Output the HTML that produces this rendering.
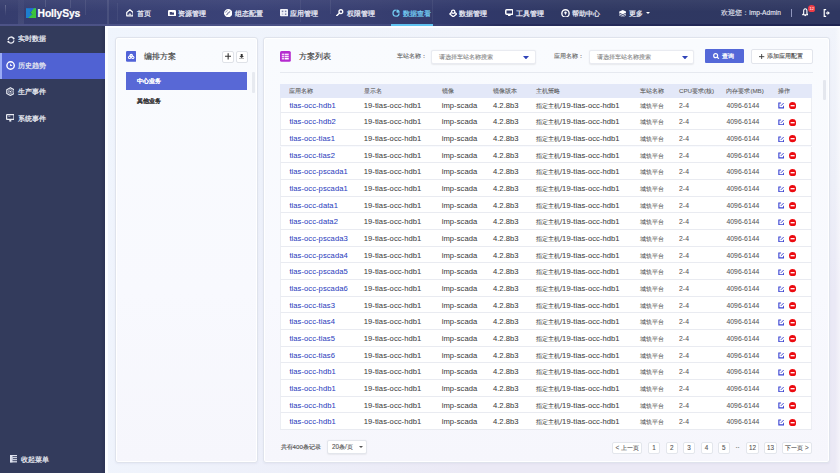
<!DOCTYPE html>
<html><head><meta charset="utf-8">
<style>
*{margin:0;padding:0;box-sizing:border-box}
html,body{width:840px;height:473px;overflow:hidden;font-family:"Liberation Sans",sans-serif;background:#eef1f8;position:relative}
.abs{position:absolute}
#hdr{left:0;top:0;width:840px;height:26px;background:linear-gradient(180deg,rgba(255,255,255,.05),rgba(255,255,255,0) 45%),linear-gradient(90deg,#363d6e 0%,#384073 15%,#3a4277 30%,#373e70 45%,#30386a 56%,#2f3862 70%,#2f3761 100%)}
#hdrline{left:0;top:24px;width:840px;height:2px;background:linear-gradient(90deg,#4d5387 0%,#4a5186 40%,#3f467a 50%,#272d5c 60%,#1f2552 100%)}
.nav{position:absolute;top:0;height:26px;color:#e9ebf5;font-size:7.3px;line-height:27px;white-space:nowrap}
#side{left:0;top:26px;width:105px;height:447px;background:#333b5c}
.si{position:absolute;left:0;width:105px;height:26.5px;color:#e6e8f0;font-size:7.2px;line-height:26.5px;padding-left:18px;white-space:nowrap}
.si.act{background:#5062d3}
.si.act:before{content:"";position:absolute;left:0;top:0;width:1.8px;height:100%;background:#9aabf6}
.si svg{position:absolute;left:6px;top:9px}
#main{left:105px;top:26px;width:735px;height:447px;background:linear-gradient(90deg,rgba(240,245,253,.9) 0%,rgba(238,243,252,.6) 25%,rgba(236,241,252,0) 50%),linear-gradient(180deg,#f1f4fb 0%,#edeff8 35%,#eae9f6 60%,#ebe9f5 100%)}
.panel{position:absolute;background:linear-gradient(180deg,#f9fbfe 0%,#f8f9fe 60%,#f6f6fc 100%);border:1px solid #dfe3ec;border-radius:3px;box-shadow:inset 0 0 0 1px #fff,0 1px 2px rgba(120,120,170,.08)}
.t{position:absolute;white-space:nowrap}
.nav,.si,.t{-webkit-text-stroke:0.25px currentColor}
.lbl,.sel span,.pg{-webkit-text-stroke:0.1px currentColor}
.th{-webkit-text-stroke:0.08px currentColor}
.td{-webkit-text-stroke:0.05px currentColor}
.ptitle{position:absolute;top:50px;font-size:8.2px;line-height:14px;font-weight:normal;color:#333;white-space:nowrap;-webkit-text-stroke:0.12px #333}
.ibtn{position:absolute;top:50.5px;width:11.5px;height:12px;border:1px solid #dfe2e8;border-radius:2px;background:#fff}
.sel{position:absolute;top:49.5px;height:14.2px;background:#fff;border:1px solid #e9ebf1;border-radius:2px;box-shadow:0 0.5px 1.5px rgba(0,0,0,.07)}
.sel span{position:absolute;left:7px;top:0;line-height:11.8px;font-size:6.3px;color:#888}
.sel i{position:absolute;right:6.3px;top:5.2px;width:0;height:0;border-left:2.7px solid transparent;border-right:2.7px solid transparent;border-top:2.7px solid #3044b8}
.lbl{position:absolute;top:49.5px;line-height:12.6px;font-size:6.2px;color:#666;white-space:nowrap}
.th{position:absolute;height:13px;line-height:14px;font-size:6.2px;color:#5e5e5e;white-space:nowrap}
.tr{position:absolute;left:280.2px;width:532.3px;height:16.67px;border-bottom:1px solid #e9ebf1;border-left:1px solid #eceef3;border-right:1px solid #eceef3;background:#fff}
.td{position:absolute;height:16.67px;line-height:17.6px;font-size:7.6px;letter-spacing:0.06px;color:#404040;white-space:nowrap}
.td.lk{color:#2e3fc0}
.td .c{font-size:6.05px}
.td.sm{font-size:6.8px;color:#555}
.td.sm .c{font-size:6.3px}
.pg{position:absolute;top:441.5px;height:12.2px;background:#fff;border:1px solid #e3e6ec;border-radius:2px;font-size:6.3px;line-height:10.4px;text-align:center;color:#555;white-space:nowrap}
</style></head><body>
<div id="hdr" class="abs"></div>
<div id="hdrline" class="abs"></div>
<div class="abs" style="left:4.8px;top:5px;width:1.4px;height:11px;background:linear-gradient(180deg,rgba(255,255,255,.22),rgba(255,255,255,0))"></div>
<div class="abs" style="left:17.5px;top:0;width:6px;height:24px;background:linear-gradient(180deg,rgba(255,255,255,.02),rgba(255,255,255,.07))"></div>
<div class="abs" style="left:45px;top:0;width:1px;height:7px;background:rgba(255,255,255,.12)"></div>
<div class="abs" style="left:70px;top:0;width:1px;height:8px;background:rgba(255,255,255,.10)"></div>
<div class="abs" style="left:85px;top:0;width:1px;height:15px;background:rgba(255,255,255,.08)"></div>
<div class="abs" style="left:107px;top:0;width:2px;height:24px;background:rgba(255,255,255,.09)"></div>
<div class="abs" style="left:117px;top:3px;width:1px;height:18px;background:rgba(255,255,255,.06)"></div>
<div class="abs" style="left:300px;top:0;width:1px;height:22px;background:rgba(255,255,255,.06)"></div>
<div class="abs" style="left:330px;top:0;width:1px;height:14px;background:rgba(255,255,255,.07)"></div>
<div class="abs" style="left:432px;top:0;width:1px;height:22px;background:rgba(255,255,255,.06)"></div>
<!-- logo -->
<svg class="abs" style="left:25.8px;top:7.8px" width="10.2" height="10.6" viewBox="0 0 10 10"><rect width="10" height="10" fill="#1d7fd0"/><path d="M3 0H7.8L5.3 3.2L4.2 1.8Z" fill="#2a5fd8" opacity=".7"/><path d="M7.8 0H10V10H1.7L6 6.2L5.1 5.3L4.3 4.3L5.3 3.2Z" fill="#3cc43e"/><path d="M5.3 3.2L4.3 4.3L5.1 5.3L6 6.2" fill="none" stroke="#27346e" stroke-width="0.5"/></svg>
<div class="t" style="left:37.6px;top:7.3px;font-weight:bold;font-size:10.3px;letter-spacing:-0.12px;color:#fff;line-height:14px;-webkit-text-stroke:0.2px #fff">HollySys</div>

<!-- nav icons -->
<svg class="abs" style="left:125.5px;top:9.2px" width="7.8" height="7.6" viewBox="0 0 16 15.5"><path d="M8 1.5L14.5 7V14H1.5V7Z" fill="none" stroke="#fff" stroke-width="2.4" stroke-linejoin="round"/><path d="M5 12A3 3 0 0 1 11 12Z" fill="#fff"/></svg>
<div class="nav" style="left:136.5px">首页</div>
<svg class="abs" style="left:167.8px;top:9.6px" width="8" height="6.6" viewBox="0 0 16 13"><rect x="0" y="0" width="16" height="13" rx="2.5" fill="#fff"/><path d="M3.5 4H7.5L8.5 5H12V9.5H3.5Z" fill="#3a4172"/></svg>
<div class="nav" style="left:177.5px">资源管理</div>
<svg class="abs" style="left:223.7px;top:8.8px" width="8.4" height="8.3" viewBox="0 0 16 16"><circle cx="8" cy="8" r="8" fill="#fff"/><path d="M3.5 12.5L7 7L12.5 3.5L9 9Z" fill="#3a4172"/><circle cx="8" cy="8" r="1.2" fill="#fff"/><path d="M3 7A5 5 0 0 1 7 3" fill="none" stroke="#3a4172" stroke-width="1"/></svg>
<div class="nav" style="left:234.5px">组态配置</div>
<svg class="abs" style="left:279.8px;top:9.4px" width="8.2" height="7.3" viewBox="0 0 16 14"><rect x="0" y="0" width="16" height="14" rx="2" fill="#f2f3f8"/><rect x="3.5" y="3" width="3" height="3" fill="#7c82a8"/><rect x="9.5" y="3" width="3" height="3" fill="#7c82a8"/><rect x="3.5" y="8.5" width="3" height="3" fill="#c2c5d8"/><rect x="9.5" y="8.5" width="3" height="3" fill="#7c82a8"/></svg>
<div class="nav" style="left:290px">应用管理</div>
<svg class="abs" style="left:336.3px;top:8.8px" width="7.7" height="7.4" viewBox="0 0 15 14.5"><circle cx="9.5" cy="5.2" r="3.7" fill="none" stroke="#fff" stroke-width="2.6"/><path d="M7 8L1.2 13.3" stroke="#fff" stroke-width="2.8" stroke-linecap="round"/></svg>
<div class="nav" style="left:346.5px">权限管理</div>
<svg class="abs" style="left:391.8px;top:9px" width="8.3" height="8.2" viewBox="0 0 16 16"><path d="M7.4 2.2A6 6 0 1 0 13.8 8.6" fill="none" stroke="#72c8ef" stroke-width="2.4"/><path d="M8.6 7.4V1A6.4 6.4 0 0 1 15 7.4Z" fill="#72c8ef"/><circle cx="7.6" cy="8.4" r="2.2" fill="#2c3262" opacity=".6"/></svg>
<div class="nav" style="left:403px;color:#72c8ef">数据查看</div>
<div class="abs" style="left:391px;top:24px;width:42px;height:2.2px;background:#5ec2f0"></div>
<svg class="abs" style="left:448.7px;top:8.7px" width="8.4" height="8.3" viewBox="0 0 16 16"><circle cx="8" cy="5.2" r="3.2" fill="none" stroke="#fff" stroke-width="2.5"/><path d="M4.3 6.8L1.5 9.6L8 15L14.5 9.6L11.7 6.8" fill="none" stroke="#fff" stroke-width="2.5" stroke-linejoin="round"/></svg>
<div class="nav" style="left:459px">数据管理</div>
<svg class="abs" style="left:504.8px;top:9.1px" width="8.6" height="7.3" viewBox="0 0 17 14.5"><rect x="1.5" y="1.5" width="14" height="8.8" rx="1.8" fill="none" stroke="#fff" stroke-width="3"/><rect x="6" y="10" width="5" height="4.5" fill="#fff"/></svg>
<div class="nav" style="left:516px">工具管理</div>
<svg class="abs" style="left:561.1px;top:8.5px" width="9" height="8.9" viewBox="0 0 18 18"><circle cx="9" cy="9" r="7.4" fill="none" stroke="#fff" stroke-width="2.8"/><circle cx="9" cy="7.3" r="2.4" fill="#fff"/><path d="M7.4 8.4L9 12.8L10.6 8.4Z" fill="#fff"/></svg>
<div class="nav" style="left:572px">帮助中心</div>
<svg class="abs" style="left:618.5px;top:9.6px" width="7.5" height="7.1" viewBox="0 0 15 14"><path d="M7.5 0L15 3.5V5L7.5 8.5L0 5V3.5Z" fill="#fff"/><path d="M0 6.5L7.5 10L15 6.5V8.5L7.5 12L0 8.5Z" fill="#dfe1ee"/><path d="M0 10L7.5 13.2L15 10V11L7.5 14L0 11Z" fill="#fff"/></svg>
<div class="nav" style="left:629px">更多</div>
<div class="abs" style="left:646px;top:11.8px;width:0;height:0;border-left:2.1px solid transparent;border-right:2.1px solid transparent;border-top:2.6px solid #fff"></div>
<div class="t" style="right:59.2px;top:0;line-height:26px;font-size:6.6px;color:#e9ebf5;-webkit-text-stroke:0.1px #e9ebf5">欢迎您：imp-Admin</div>
<div class="abs" style="left:790.5px;top:9.4px;width:0.8px;height:7.2px;background:#9096bd"></div>
<svg class="abs" style="left:801.7px;top:8.3px" width="6.6" height="8.6" viewBox="0 0 13 17"><path d="M6.5 1.5C4 1.5 3.3 3.5 3.3 6V11L1.3 13.3H11.7L9.7 11V6C9.7 3.5 9 1.5 6.5 1.5Z" fill="none" stroke="#fff" stroke-width="2.2" stroke-linejoin="round"/><path d="M4.8 15H8.2" stroke="#fff" stroke-width="2"/></svg>
<svg class="abs" style="left:808px;top:4.7px" width="7.3" height="7.3" viewBox="0 0 10 10"><circle cx="5" cy="5" r="5" fill="#f03c46"/><text x="5" y="7" font-size="5.6" fill="#fff" text-anchor="middle" font-family="Liberation Sans">12</text></svg>
<svg class="abs" style="left:823.1px;top:8.8px" width="7.3" height="8.1" viewBox="0 0 14 16"><path d="M6 1.3H2.2V14.7H6" fill="none" stroke="#fff" stroke-width="2.4"/><path d="M5.5 8H9" stroke="#fff" stroke-width="2.4"/><path d="M8.5 4L13.5 8L8.5 12Z" fill="#fff"/></svg>

<div id="side" class="abs">
  <div class="abs" style="left:100px;top:0;width:5px;height:447px;background:linear-gradient(90deg,rgba(30,36,70,0),rgba(30,36,70,.35))"></div>
  <div class="si" style="top:0"><svg width="8" height="8.2" viewBox="0 0 16 16" style="left:6.5px;top:9.8px"><path d="M2.3 6.4A6 6 0 0 1 13.3 4.8" fill="none" stroke="#e9ebf3" stroke-width="2.6" stroke-linecap="round"/><path d="M13.7 9.6A6 6 0 0 1 2.7 11.2" fill="none" stroke="#e9ebf3" stroke-width="2.6" stroke-linecap="round"/><circle cx="13.3" cy="4.8" r="1.8" fill="#f4f5fa"/><circle cx="2.7" cy="11.2" r="1.8" fill="#f4f5fa"/></svg>实时数据</div>
  <div class="si act" style="top:26.5px"><svg width="9.2" height="9" viewBox="0 0 18 18" style="left:5.8px;top:8.6px"><circle cx="9" cy="9" r="7.4" fill="none" stroke="#fff" stroke-width="2.8"/><path d="M8 4.8V10.2H12.8Z" fill="#fff"/></svg>历史趋势</div>
  <div class="si" style="top:53px"><svg width="8.8" height="9.2" viewBox="0 0 17 18" style="left:5.7px;top:8.4px"><path d="M8.5 1.3L15.6 5.2V12.8L8.5 16.7L1.4 12.8V5.2Z" fill="none" stroke="#e9ebf3" stroke-width="2.3" stroke-linejoin="round"/><circle cx="8.5" cy="9" r="3.9" fill="none" stroke="#e9ebf3" stroke-width="1.2"/><path d="M6.2 7.6H10.8L8.5 11.2Z" fill="#e9ebf3"/></svg>生产事件</div>
  <div class="si" style="top:79.5px"><svg width="8.6" height="7.6" viewBox="0 0 17 15" style="left:5.8px;top:8.7px"><rect x="1.2" y="1.2" width="14.6" height="9.5" rx="1" fill="none" stroke="#e9ebf3" stroke-width="2.4"/><path d="M4.5 4.5H8.5" stroke="#c8cbe0" stroke-width="1.6"/><rect x="6.5" y="10" width="4" height="5" fill="#e9ebf3"/></svg>系统事件</div>
  <div class="si" style="top:420.5px;padding-left:20.5px"><svg width="7.2" height="7.4" viewBox="0 0 14.4 14.8" style="left:9.5px;top:8.9px"><rect x="0" y="0" width="14.4" height="2.4" fill="#dfe2ee"/><rect x="0" y="12.4" width="14.4" height="2.4" fill="#dfe2ee"/><rect x="0" y="0" width="5" height="14.8" fill="#dfe2ee"/><rect x="5" y="4.2" width="9.4" height="2.2" fill="#dfe2ee"/><rect x="5" y="8.3" width="9.4" height="2.2" fill="#dfe2ee"/><rect x="3" y="4" width="2.5" height="6.5" fill="#c9cde0"/></svg>收起菜单</div>
</div>

<div id="main" class="abs"></div>
<div class="abs" style="left:105px;top:26px;width:2.5px;height:447px;background:#fbfdff"></div>
<div class="abs" style="left:835px;top:26px;width:5px;height:447px;background:linear-gradient(90deg,rgba(255,255,255,0),rgba(255,255,255,.5))"></div>
<div class="abs" style="left:105px;top:26px;width:735px;height:2px;background:#fbfdff"></div>
<div class="panel" style="left:114.5px;top:36.5px;width:143px;height:426.8px"></div>
<div class="panel" style="left:262.5px;top:36.5px;width:567px;height:426.8px"></div>

<!-- left panel -->
<svg class="abs" style="left:126px;top:51.2px" width="10.4" height="10.7" viewBox="0 0 21 21.6"><rect width="21" height="21.6" rx="2.5" fill="#5163d8"/><circle cx="10.5" cy="9" r="3.6" fill="#fff"/><circle cx="7.3" cy="13" r="3.3" fill="#fff"/><circle cx="13.7" cy="13" r="3.3" fill="#fff"/><circle cx="7.3" cy="13" r="1.3" fill="#5163d8"/><circle cx="13.7" cy="13" r="1.3" fill="#5163d8"/><circle cx="10.5" cy="9.2" r="1.2" fill="#8f9be6"/></svg>
<div class="ptitle" style="left:144.2px">编排方案</div>
<div class="ibtn" style="left:222.3px"><svg class="abs" style="left:1.7px;top:1.7px" width="6.3" height="6.6" viewBox="0 0 12 12.6"><path d="M6 0.3V12.3M0 6.3H12" stroke="#333" stroke-width="2.1"/></svg></div>
<div class="ibtn" style="left:236.3px"><svg class="abs" style="left:1.5px;top:2.3px" width="5.4" height="5.6" viewBox="0 0 10 10.4"><path d="M3.2 0H6.8V3.8H9.2L5 7.6L0.8 3.8H3.2Z" fill="#333"/><rect x="0" y="8.6" width="10" height="1.8" fill="#333"/></svg></div>
<div class="abs" style="left:126px;top:72.4px;width:121.3px;height:17.4px;background:#5868d6"></div>
<div class="t" style="left:136.6px;top:72.4px;line-height:17.4px;font-size:6.3px;font-weight:bold;color:#fff;-webkit-text-stroke:0.05px #fff">中心业务</div>
<div class="t" style="left:136.6px;top:91.8px;line-height:17.4px;font-size:6.3px;font-weight:bold;color:#333;-webkit-text-stroke:0.05px #333">其他业务</div>
<div class="abs" style="left:252.3px;top:72px;width:2.3px;height:21px;background:#e7eaf0;border-radius:1px"></div>

<!-- right panel header -->
<svg class="abs" style="left:280.2px;top:51px" width="10.8" height="10.9" viewBox="0 0 21 21"><rect width="21" height="21" rx="3" fill="#b52bcf"/><rect x="3.5" y="5" width="5" height="3" fill="#f3d6f8"/><rect x="9.5" y="5" width="7.5" height="3" fill="#f7e2fa"/><rect x="3.5" y="9.2" width="5" height="3" fill="#f3d6f8"/><rect x="9.5" y="9.2" width="7.5" height="3" fill="#f7e2fa"/><rect x="3.5" y="13.4" width="5" height="3" fill="#f3d6f8"/><rect x="9.5" y="13.4" width="7.5" height="3" fill="#fff"/></svg>
<div class="ptitle" style="left:298.6px">方案列表</div>
<div class="lbl" style="left:396.8px">车站名称：</div>
<div class="sel" style="left:431.4px;width:104.8px"><span>请选择车站名称搜索</span><svg style="position:absolute;right:5.8px;top:5px" width="6" height="3.4" viewBox="0 0 6 3.4"><path d="M0 0H6L3 3.4Z" fill="#2f43b8"/></svg></div>
<div class="lbl" style="left:554.3px">应用名称：</div>
<div class="sel" style="left:589px;width:105.3px"><span>请选择车站名称搜索</span><svg style="position:absolute;right:5.8px;top:5px" width="6" height="3.4" viewBox="0 0 6 3.4"><path d="M0 0H6L3 3.4Z" fill="#2f43b8"/></svg></div>
<div class="abs" style="left:704.7px;top:49.4px;width:39.4px;height:13.8px;background:#5468d8;border-radius:1px"></div>
<svg class="abs" style="left:713.3px;top:53.2px" width="6.3" height="6.3" viewBox="0 0 13 13"><circle cx="5.5" cy="5.5" r="4.1" fill="none" stroke="#fff" stroke-width="2.4"/><path d="M8.6 8.6L12 12" stroke="#fff" stroke-width="2.6"/></svg>
<div class="t" style="left:721.8px;top:49.4px;line-height:14px;font-size:6.3px;color:#fff">查询</div>
<div class="abs" style="left:751.2px;top:49.2px;width:61.4px;height:14.8px;background:#fff;border:1px solid #e2e5ec;border-radius:2px"></div>
<svg class="abs" style="left:759.3px;top:54px" width="5.3" height="5.3" viewBox="0 0 11 11"><path d="M5.5 0V11M0 5.5H11" stroke="#333" stroke-width="1.8"/></svg>
<div class="t" style="left:767.2px;top:49.2px;line-height:14.8px;font-size:6.3px;color:#444;-webkit-text-stroke:0.1px #444">添加应用配置</div>
<div class="abs" style="left:280px;top:72.2px;width:532.5px;height:1px;background:#e6e9f0"></div>
<div class="abs" style="left:823px;top:80px;width:2.5px;height:19.5px;background:#e4e7ee;border-radius:1px"></div>

<div class="abs" style="left:280.2px;top:83.5px;width:532.3px;height:14.4px;background:#e3e8f8;z-index:2"></div>
<div class="th" style="left:289.4px;top:84.1px;z-index:3">应用名称</div>
<div class="th" style="left:363.8px;top:84.1px;z-index:3">显示名</div>
<div class="th" style="left:441.7px;top:84.1px;z-index:3">镜像</div>
<div class="th" style="left:492.9px;top:84.1px;z-index:3">镜像版本</div>
<div class="th" style="left:535.7px;top:84.1px;z-index:3">主机策略</div>
<div class="th" style="left:640.2px;top:84.1px;z-index:3">车站名称</div>
<div class="th" style="left:679px;top:84.1px;z-index:3">CPU要求(核)</div>
<div class="th" style="left:726.4px;top:84.1px;z-index:3">内存要求(MB)</div>
<div class="th" style="left:777.6px;top:84.1px;z-index:3">操作</div>
<div class="tr" style="top:96.50px"></div>
<div class="td lk" style="left:289.4px;top:96.50px">tias-occ-hdb1</div>
<div class="td" style="left:363.8px;top:96.50px">19-tias-occ-hdb1</div>
<div class="td" style="left:441.7px;top:96.50px">imp-scada</div>
<div class="td" style="left:492.9px;top:96.50px">4.2.8b3</div>
<div class="td" style="left:535.7px;top:96.50px"><span class="c">指定主机</span>/19-tias-occ-hdb1</div>
<div class="td sm" style="left:640.2px;top:96.50px"><span class="c">城轨平台</span></div>
<div class="td sm" style="left:679px;top:96.50px">2-4</div>
<div class="td sm" style="left:726.4px;top:96.50px">4096-6144</div>
<svg class="abs" style="left:777.6px;top:102.40px" width="6.6" height="6.4" viewBox="0 0 15 14"><path d="M13 8V13H2V2H7" fill="none" stroke="#3a44d2" stroke-width="2.6"/><path d="M6.5 8.5L13 2" stroke="#3a44d2" stroke-width="2.2"/></svg>
<svg class="abs" style="left:789px;top:102.00px" width="7.2" height="7.4" viewBox="0 0 10 10"><circle cx="5" cy="5" r="5" fill="#ec0a10"/><rect x="2.2" y="4.1" width="5.6" height="1.8" fill="#fff"/></svg>
<div class="tr" style="top:113.17px"></div>
<div class="td lk" style="left:289.4px;top:113.17px">tias-occ-hdb2</div>
<div class="td" style="left:363.8px;top:113.17px">19-tias-occ-hdb1</div>
<div class="td" style="left:441.7px;top:113.17px">imp-scada</div>
<div class="td" style="left:492.9px;top:113.17px">4.2.8b3</div>
<div class="td" style="left:535.7px;top:113.17px"><span class="c">指定主机</span>/19-tias-occ-hdb1</div>
<div class="td sm" style="left:640.2px;top:113.17px"><span class="c">城轨平台</span></div>
<div class="td sm" style="left:679px;top:113.17px">2-4</div>
<div class="td sm" style="left:726.4px;top:113.17px">4096-6144</div>
<svg class="abs" style="left:777.6px;top:119.07px" width="6.6" height="6.4" viewBox="0 0 15 14"><path d="M13 8V13H2V2H7" fill="none" stroke="#3a44d2" stroke-width="2.6"/><path d="M6.5 8.5L13 2" stroke="#3a44d2" stroke-width="2.2"/></svg>
<svg class="abs" style="left:789px;top:118.67px" width="7.2" height="7.4" viewBox="0 0 10 10"><circle cx="5" cy="5" r="5" fill="#ec0a10"/><rect x="2.2" y="4.1" width="5.6" height="1.8" fill="#fff"/></svg>
<div class="tr" style="top:129.84px"></div>
<div class="td lk" style="left:289.4px;top:129.84px">tias-occ-tias1</div>
<div class="td" style="left:363.8px;top:129.84px">19-tias-occ-hdb1</div>
<div class="td" style="left:441.7px;top:129.84px">imp-scada</div>
<div class="td" style="left:492.9px;top:129.84px">4.2.8b3</div>
<div class="td" style="left:535.7px;top:129.84px"><span class="c">指定主机</span>/19-tias-occ-hdb1</div>
<div class="td sm" style="left:640.2px;top:129.84px"><span class="c">城轨平台</span></div>
<div class="td sm" style="left:679px;top:129.84px">2-4</div>
<div class="td sm" style="left:726.4px;top:129.84px">4096-6144</div>
<svg class="abs" style="left:777.6px;top:135.74px" width="6.6" height="6.4" viewBox="0 0 15 14"><path d="M13 8V13H2V2H7" fill="none" stroke="#3a44d2" stroke-width="2.6"/><path d="M6.5 8.5L13 2" stroke="#3a44d2" stroke-width="2.2"/></svg>
<svg class="abs" style="left:789px;top:135.34px" width="7.2" height="7.4" viewBox="0 0 10 10"><circle cx="5" cy="5" r="5" fill="#ec0a10"/><rect x="2.2" y="4.1" width="5.6" height="1.8" fill="#fff"/></svg>
<div class="tr" style="top:146.51px"></div>
<div class="td lk" style="left:289.4px;top:146.51px">tias-occ-tias2</div>
<div class="td" style="left:363.8px;top:146.51px">19-tias-occ-hdb1</div>
<div class="td" style="left:441.7px;top:146.51px">imp-scada</div>
<div class="td" style="left:492.9px;top:146.51px">4.2.8b3</div>
<div class="td" style="left:535.7px;top:146.51px"><span class="c">指定主机</span>/19-tias-occ-hdb1</div>
<div class="td sm" style="left:640.2px;top:146.51px"><span class="c">城轨平台</span></div>
<div class="td sm" style="left:679px;top:146.51px">2-4</div>
<div class="td sm" style="left:726.4px;top:146.51px">4096-6144</div>
<svg class="abs" style="left:777.6px;top:152.41px" width="6.6" height="6.4" viewBox="0 0 15 14"><path d="M13 8V13H2V2H7" fill="none" stroke="#3a44d2" stroke-width="2.6"/><path d="M6.5 8.5L13 2" stroke="#3a44d2" stroke-width="2.2"/></svg>
<svg class="abs" style="left:789px;top:152.01px" width="7.2" height="7.4" viewBox="0 0 10 10"><circle cx="5" cy="5" r="5" fill="#ec0a10"/><rect x="2.2" y="4.1" width="5.6" height="1.8" fill="#fff"/></svg>
<div class="tr" style="top:163.18px"></div>
<div class="td lk" style="left:289.4px;top:163.18px">tias-occ-pscada1</div>
<div class="td" style="left:363.8px;top:163.18px">19-tias-occ-hdb1</div>
<div class="td" style="left:441.7px;top:163.18px">imp-scada</div>
<div class="td" style="left:492.9px;top:163.18px">4.2.8b3</div>
<div class="td" style="left:535.7px;top:163.18px"><span class="c">指定主机</span>/19-tias-occ-hdb1</div>
<div class="td sm" style="left:640.2px;top:163.18px"><span class="c">城轨平台</span></div>
<div class="td sm" style="left:679px;top:163.18px">2-4</div>
<div class="td sm" style="left:726.4px;top:163.18px">4096-6144</div>
<svg class="abs" style="left:777.6px;top:169.08px" width="6.6" height="6.4" viewBox="0 0 15 14"><path d="M13 8V13H2V2H7" fill="none" stroke="#3a44d2" stroke-width="2.6"/><path d="M6.5 8.5L13 2" stroke="#3a44d2" stroke-width="2.2"/></svg>
<svg class="abs" style="left:789px;top:168.68px" width="7.2" height="7.4" viewBox="0 0 10 10"><circle cx="5" cy="5" r="5" fill="#ec0a10"/><rect x="2.2" y="4.1" width="5.6" height="1.8" fill="#fff"/></svg>
<div class="tr" style="top:179.85px"></div>
<div class="td lk" style="left:289.4px;top:179.85px">tias-occ-pscada1</div>
<div class="td" style="left:363.8px;top:179.85px">19-tias-occ-hdb1</div>
<div class="td" style="left:441.7px;top:179.85px">imp-scada</div>
<div class="td" style="left:492.9px;top:179.85px">4.2.8b3</div>
<div class="td" style="left:535.7px;top:179.85px"><span class="c">指定主机</span>/19-tias-occ-hdb1</div>
<div class="td sm" style="left:640.2px;top:179.85px"><span class="c">城轨平台</span></div>
<div class="td sm" style="left:679px;top:179.85px">2-4</div>
<div class="td sm" style="left:726.4px;top:179.85px">4096-6144</div>
<svg class="abs" style="left:777.6px;top:185.75px" width="6.6" height="6.4" viewBox="0 0 15 14"><path d="M13 8V13H2V2H7" fill="none" stroke="#3a44d2" stroke-width="2.6"/><path d="M6.5 8.5L13 2" stroke="#3a44d2" stroke-width="2.2"/></svg>
<svg class="abs" style="left:789px;top:185.35px" width="7.2" height="7.4" viewBox="0 0 10 10"><circle cx="5" cy="5" r="5" fill="#ec0a10"/><rect x="2.2" y="4.1" width="5.6" height="1.8" fill="#fff"/></svg>
<div class="tr" style="top:196.52px"></div>
<div class="td lk" style="left:289.4px;top:196.52px">tias-occ-data1</div>
<div class="td" style="left:363.8px;top:196.52px">19-tias-occ-hdb1</div>
<div class="td" style="left:441.7px;top:196.52px">imp-scada</div>
<div class="td" style="left:492.9px;top:196.52px">4.2.8b3</div>
<div class="td" style="left:535.7px;top:196.52px"><span class="c">指定主机</span>/19-tias-occ-hdb1</div>
<div class="td sm" style="left:640.2px;top:196.52px"><span class="c">城轨平台</span></div>
<div class="td sm" style="left:679px;top:196.52px">2-4</div>
<div class="td sm" style="left:726.4px;top:196.52px">4096-6144</div>
<svg class="abs" style="left:777.6px;top:202.42px" width="6.6" height="6.4" viewBox="0 0 15 14"><path d="M13 8V13H2V2H7" fill="none" stroke="#3a44d2" stroke-width="2.6"/><path d="M6.5 8.5L13 2" stroke="#3a44d2" stroke-width="2.2"/></svg>
<svg class="abs" style="left:789px;top:202.02px" width="7.2" height="7.4" viewBox="0 0 10 10"><circle cx="5" cy="5" r="5" fill="#ec0a10"/><rect x="2.2" y="4.1" width="5.6" height="1.8" fill="#fff"/></svg>
<div class="tr" style="top:213.19px"></div>
<div class="td lk" style="left:289.4px;top:213.19px">tias-occ-data2</div>
<div class="td" style="left:363.8px;top:213.19px">19-tias-occ-hdb1</div>
<div class="td" style="left:441.7px;top:213.19px">imp-scada</div>
<div class="td" style="left:492.9px;top:213.19px">4.2.8b3</div>
<div class="td" style="left:535.7px;top:213.19px"><span class="c">指定主机</span>/19-tias-occ-hdb1</div>
<div class="td sm" style="left:640.2px;top:213.19px"><span class="c">城轨平台</span></div>
<div class="td sm" style="left:679px;top:213.19px">2-4</div>
<div class="td sm" style="left:726.4px;top:213.19px">4096-6144</div>
<svg class="abs" style="left:777.6px;top:219.09px" width="6.6" height="6.4" viewBox="0 0 15 14"><path d="M13 8V13H2V2H7" fill="none" stroke="#3a44d2" stroke-width="2.6"/><path d="M6.5 8.5L13 2" stroke="#3a44d2" stroke-width="2.2"/></svg>
<svg class="abs" style="left:789px;top:218.69px" width="7.2" height="7.4" viewBox="0 0 10 10"><circle cx="5" cy="5" r="5" fill="#ec0a10"/><rect x="2.2" y="4.1" width="5.6" height="1.8" fill="#fff"/></svg>
<div class="tr" style="top:229.86px"></div>
<div class="td lk" style="left:289.4px;top:229.86px">tias-occ-pscada3</div>
<div class="td" style="left:363.8px;top:229.86px">19-tias-occ-hdb1</div>
<div class="td" style="left:441.7px;top:229.86px">imp-scada</div>
<div class="td" style="left:492.9px;top:229.86px">4.2.8b3</div>
<div class="td" style="left:535.7px;top:229.86px"><span class="c">指定主机</span>/19-tias-occ-hdb1</div>
<div class="td sm" style="left:640.2px;top:229.86px"><span class="c">城轨平台</span></div>
<div class="td sm" style="left:679px;top:229.86px">2-4</div>
<div class="td sm" style="left:726.4px;top:229.86px">4096-6144</div>
<svg class="abs" style="left:777.6px;top:235.76px" width="6.6" height="6.4" viewBox="0 0 15 14"><path d="M13 8V13H2V2H7" fill="none" stroke="#3a44d2" stroke-width="2.6"/><path d="M6.5 8.5L13 2" stroke="#3a44d2" stroke-width="2.2"/></svg>
<svg class="abs" style="left:789px;top:235.36px" width="7.2" height="7.4" viewBox="0 0 10 10"><circle cx="5" cy="5" r="5" fill="#ec0a10"/><rect x="2.2" y="4.1" width="5.6" height="1.8" fill="#fff"/></svg>
<div class="tr" style="top:246.53px"></div>
<div class="td lk" style="left:289.4px;top:246.53px">tias-occ-pscada4</div>
<div class="td" style="left:363.8px;top:246.53px">19-tias-occ-hdb1</div>
<div class="td" style="left:441.7px;top:246.53px">imp-scada</div>
<div class="td" style="left:492.9px;top:246.53px">4.2.8b3</div>
<div class="td" style="left:535.7px;top:246.53px"><span class="c">指定主机</span>/19-tias-occ-hdb1</div>
<div class="td sm" style="left:640.2px;top:246.53px"><span class="c">城轨平台</span></div>
<div class="td sm" style="left:679px;top:246.53px">2-4</div>
<div class="td sm" style="left:726.4px;top:246.53px">4096-6144</div>
<svg class="abs" style="left:777.6px;top:252.43px" width="6.6" height="6.4" viewBox="0 0 15 14"><path d="M13 8V13H2V2H7" fill="none" stroke="#3a44d2" stroke-width="2.6"/><path d="M6.5 8.5L13 2" stroke="#3a44d2" stroke-width="2.2"/></svg>
<svg class="abs" style="left:789px;top:252.03px" width="7.2" height="7.4" viewBox="0 0 10 10"><circle cx="5" cy="5" r="5" fill="#ec0a10"/><rect x="2.2" y="4.1" width="5.6" height="1.8" fill="#fff"/></svg>
<div class="tr" style="top:263.20px"></div>
<div class="td lk" style="left:289.4px;top:263.20px">tias-occ-pscada5</div>
<div class="td" style="left:363.8px;top:263.20px">19-tias-occ-hdb1</div>
<div class="td" style="left:441.7px;top:263.20px">imp-scada</div>
<div class="td" style="left:492.9px;top:263.20px">4.2.8b3</div>
<div class="td" style="left:535.7px;top:263.20px"><span class="c">指定主机</span>/19-tias-occ-hdb1</div>
<div class="td sm" style="left:640.2px;top:263.20px"><span class="c">城轨平台</span></div>
<div class="td sm" style="left:679px;top:263.20px">2-4</div>
<div class="td sm" style="left:726.4px;top:263.20px">4096-6144</div>
<svg class="abs" style="left:777.6px;top:269.10px" width="6.6" height="6.4" viewBox="0 0 15 14"><path d="M13 8V13H2V2H7" fill="none" stroke="#3a44d2" stroke-width="2.6"/><path d="M6.5 8.5L13 2" stroke="#3a44d2" stroke-width="2.2"/></svg>
<svg class="abs" style="left:789px;top:268.70px" width="7.2" height="7.4" viewBox="0 0 10 10"><circle cx="5" cy="5" r="5" fill="#ec0a10"/><rect x="2.2" y="4.1" width="5.6" height="1.8" fill="#fff"/></svg>
<div class="tr" style="top:279.87px"></div>
<div class="td lk" style="left:289.4px;top:279.87px">tias-occ-pscada6</div>
<div class="td" style="left:363.8px;top:279.87px">19-tias-occ-hdb1</div>
<div class="td" style="left:441.7px;top:279.87px">imp-scada</div>
<div class="td" style="left:492.9px;top:279.87px">4.2.8b3</div>
<div class="td" style="left:535.7px;top:279.87px"><span class="c">指定主机</span>/19-tias-occ-hdb1</div>
<div class="td sm" style="left:640.2px;top:279.87px"><span class="c">城轨平台</span></div>
<div class="td sm" style="left:679px;top:279.87px">2-4</div>
<div class="td sm" style="left:726.4px;top:279.87px">4096-6144</div>
<svg class="abs" style="left:777.6px;top:285.77px" width="6.6" height="6.4" viewBox="0 0 15 14"><path d="M13 8V13H2V2H7" fill="none" stroke="#3a44d2" stroke-width="2.6"/><path d="M6.5 8.5L13 2" stroke="#3a44d2" stroke-width="2.2"/></svg>
<svg class="abs" style="left:789px;top:285.37px" width="7.2" height="7.4" viewBox="0 0 10 10"><circle cx="5" cy="5" r="5" fill="#ec0a10"/><rect x="2.2" y="4.1" width="5.6" height="1.8" fill="#fff"/></svg>
<div class="tr" style="top:296.54px"></div>
<div class="td lk" style="left:289.4px;top:296.54px">tias-occ-tias3</div>
<div class="td" style="left:363.8px;top:296.54px">19-tias-occ-hdb1</div>
<div class="td" style="left:441.7px;top:296.54px">imp-scada</div>
<div class="td" style="left:492.9px;top:296.54px">4.2.8b3</div>
<div class="td" style="left:535.7px;top:296.54px"><span class="c">指定主机</span>/19-tias-occ-hdb1</div>
<div class="td sm" style="left:640.2px;top:296.54px"><span class="c">城轨平台</span></div>
<div class="td sm" style="left:679px;top:296.54px">2-4</div>
<div class="td sm" style="left:726.4px;top:296.54px">4096-6144</div>
<svg class="abs" style="left:777.6px;top:302.44px" width="6.6" height="6.4" viewBox="0 0 15 14"><path d="M13 8V13H2V2H7" fill="none" stroke="#3a44d2" stroke-width="2.6"/><path d="M6.5 8.5L13 2" stroke="#3a44d2" stroke-width="2.2"/></svg>
<svg class="abs" style="left:789px;top:302.04px" width="7.2" height="7.4" viewBox="0 0 10 10"><circle cx="5" cy="5" r="5" fill="#ec0a10"/><rect x="2.2" y="4.1" width="5.6" height="1.8" fill="#fff"/></svg>
<div class="tr" style="top:313.21px"></div>
<div class="td lk" style="left:289.4px;top:313.21px">tias-occ-tias4</div>
<div class="td" style="left:363.8px;top:313.21px">19-tias-occ-hdb1</div>
<div class="td" style="left:441.7px;top:313.21px">imp-scada</div>
<div class="td" style="left:492.9px;top:313.21px">4.2.8b3</div>
<div class="td" style="left:535.7px;top:313.21px"><span class="c">指定主机</span>/19-tias-occ-hdb1</div>
<div class="td sm" style="left:640.2px;top:313.21px"><span class="c">城轨平台</span></div>
<div class="td sm" style="left:679px;top:313.21px">2-4</div>
<div class="td sm" style="left:726.4px;top:313.21px">4096-6144</div>
<svg class="abs" style="left:777.6px;top:319.11px" width="6.6" height="6.4" viewBox="0 0 15 14"><path d="M13 8V13H2V2H7" fill="none" stroke="#3a44d2" stroke-width="2.6"/><path d="M6.5 8.5L13 2" stroke="#3a44d2" stroke-width="2.2"/></svg>
<svg class="abs" style="left:789px;top:318.71px" width="7.2" height="7.4" viewBox="0 0 10 10"><circle cx="5" cy="5" r="5" fill="#ec0a10"/><rect x="2.2" y="4.1" width="5.6" height="1.8" fill="#fff"/></svg>
<div class="tr" style="top:329.88px"></div>
<div class="td lk" style="left:289.4px;top:329.88px">tias-occ-tias5</div>
<div class="td" style="left:363.8px;top:329.88px">19-tias-occ-hdb1</div>
<div class="td" style="left:441.7px;top:329.88px">imp-scada</div>
<div class="td" style="left:492.9px;top:329.88px">4.2.8b3</div>
<div class="td" style="left:535.7px;top:329.88px"><span class="c">指定主机</span>/19-tias-occ-hdb1</div>
<div class="td sm" style="left:640.2px;top:329.88px"><span class="c">城轨平台</span></div>
<div class="td sm" style="left:679px;top:329.88px">2-4</div>
<div class="td sm" style="left:726.4px;top:329.88px">4096-6144</div>
<svg class="abs" style="left:777.6px;top:335.78px" width="6.6" height="6.4" viewBox="0 0 15 14"><path d="M13 8V13H2V2H7" fill="none" stroke="#3a44d2" stroke-width="2.6"/><path d="M6.5 8.5L13 2" stroke="#3a44d2" stroke-width="2.2"/></svg>
<svg class="abs" style="left:789px;top:335.38px" width="7.2" height="7.4" viewBox="0 0 10 10"><circle cx="5" cy="5" r="5" fill="#ec0a10"/><rect x="2.2" y="4.1" width="5.6" height="1.8" fill="#fff"/></svg>
<div class="tr" style="top:346.55px"></div>
<div class="td lk" style="left:289.4px;top:346.55px">tias-occ-tias6</div>
<div class="td" style="left:363.8px;top:346.55px">19-tias-occ-hdb1</div>
<div class="td" style="left:441.7px;top:346.55px">imp-scada</div>
<div class="td" style="left:492.9px;top:346.55px">4.2.8b3</div>
<div class="td" style="left:535.7px;top:346.55px"><span class="c">指定主机</span>/19-tias-occ-hdb1</div>
<div class="td sm" style="left:640.2px;top:346.55px"><span class="c">城轨平台</span></div>
<div class="td sm" style="left:679px;top:346.55px">2-4</div>
<div class="td sm" style="left:726.4px;top:346.55px">4096-6144</div>
<svg class="abs" style="left:777.6px;top:352.45px" width="6.6" height="6.4" viewBox="0 0 15 14"><path d="M13 8V13H2V2H7" fill="none" stroke="#3a44d2" stroke-width="2.6"/><path d="M6.5 8.5L13 2" stroke="#3a44d2" stroke-width="2.2"/></svg>
<svg class="abs" style="left:789px;top:352.05px" width="7.2" height="7.4" viewBox="0 0 10 10"><circle cx="5" cy="5" r="5" fill="#ec0a10"/><rect x="2.2" y="4.1" width="5.6" height="1.8" fill="#fff"/></svg>
<div class="tr" style="top:363.22px"></div>
<div class="td lk" style="left:289.4px;top:363.22px">tias-occ-hdb1</div>
<div class="td" style="left:363.8px;top:363.22px">19-tias-occ-hdb1</div>
<div class="td" style="left:441.7px;top:363.22px">imp-scada</div>
<div class="td" style="left:492.9px;top:363.22px">4.2.8b3</div>
<div class="td" style="left:535.7px;top:363.22px"><span class="c">指定主机</span>/19-tias-occ-hdb1</div>
<div class="td sm" style="left:640.2px;top:363.22px"><span class="c">城轨平台</span></div>
<div class="td sm" style="left:679px;top:363.22px">2-4</div>
<div class="td sm" style="left:726.4px;top:363.22px">4096-6144</div>
<svg class="abs" style="left:777.6px;top:369.12px" width="6.6" height="6.4" viewBox="0 0 15 14"><path d="M13 8V13H2V2H7" fill="none" stroke="#3a44d2" stroke-width="2.6"/><path d="M6.5 8.5L13 2" stroke="#3a44d2" stroke-width="2.2"/></svg>
<svg class="abs" style="left:789px;top:368.72px" width="7.2" height="7.4" viewBox="0 0 10 10"><circle cx="5" cy="5" r="5" fill="#ec0a10"/><rect x="2.2" y="4.1" width="5.6" height="1.8" fill="#fff"/></svg>
<div class="tr" style="top:379.89px"></div>
<div class="td lk" style="left:289.4px;top:379.89px">tias-occ-hdb1</div>
<div class="td" style="left:363.8px;top:379.89px">19-tias-occ-hdb1</div>
<div class="td" style="left:441.7px;top:379.89px">imp-scada</div>
<div class="td" style="left:492.9px;top:379.89px">4.2.8b3</div>
<div class="td" style="left:535.7px;top:379.89px"><span class="c">指定主机</span>/19-tias-occ-hdb1</div>
<div class="td sm" style="left:640.2px;top:379.89px"><span class="c">城轨平台</span></div>
<div class="td sm" style="left:679px;top:379.89px">2-4</div>
<div class="td sm" style="left:726.4px;top:379.89px">4096-6144</div>
<svg class="abs" style="left:777.6px;top:385.79px" width="6.6" height="6.4" viewBox="0 0 15 14"><path d="M13 8V13H2V2H7" fill="none" stroke="#3a44d2" stroke-width="2.6"/><path d="M6.5 8.5L13 2" stroke="#3a44d2" stroke-width="2.2"/></svg>
<svg class="abs" style="left:789px;top:385.39px" width="7.2" height="7.4" viewBox="0 0 10 10"><circle cx="5" cy="5" r="5" fill="#ec0a10"/><rect x="2.2" y="4.1" width="5.6" height="1.8" fill="#fff"/></svg>
<div class="tr" style="top:396.56px"></div>
<div class="td lk" style="left:289.4px;top:396.56px">tias-occ-hdb1</div>
<div class="td" style="left:363.8px;top:396.56px">19-tias-occ-hdb1</div>
<div class="td" style="left:441.7px;top:396.56px">imp-scada</div>
<div class="td" style="left:492.9px;top:396.56px">4.2.8b3</div>
<div class="td" style="left:535.7px;top:396.56px"><span class="c">指定主机</span>/19-tias-occ-hdb1</div>
<div class="td sm" style="left:640.2px;top:396.56px"><span class="c">城轨平台</span></div>
<div class="td sm" style="left:679px;top:396.56px">2-4</div>
<div class="td sm" style="left:726.4px;top:396.56px">4096-6144</div>
<svg class="abs" style="left:777.6px;top:402.46px" width="6.6" height="6.4" viewBox="0 0 15 14"><path d="M13 8V13H2V2H7" fill="none" stroke="#3a44d2" stroke-width="2.6"/><path d="M6.5 8.5L13 2" stroke="#3a44d2" stroke-width="2.2"/></svg>
<svg class="abs" style="left:789px;top:402.06px" width="7.2" height="7.4" viewBox="0 0 10 10"><circle cx="5" cy="5" r="5" fill="#ec0a10"/><rect x="2.2" y="4.1" width="5.6" height="1.8" fill="#fff"/></svg>
<div class="tr" style="top:413.23px"></div>
<div class="td lk" style="left:289.4px;top:413.23px">tias-occ-hdb1</div>
<div class="td" style="left:363.8px;top:413.23px">19-tias-occ-hdb1</div>
<div class="td" style="left:441.7px;top:413.23px">imp-scada</div>
<div class="td" style="left:492.9px;top:413.23px">4.2.8b3</div>
<div class="td" style="left:535.7px;top:413.23px"><span class="c">指定主机</span>/19-tias-occ-hdb1</div>
<div class="td sm" style="left:640.2px;top:413.23px"><span class="c">城轨平台</span></div>
<div class="td sm" style="left:679px;top:413.23px">2-4</div>
<div class="td sm" style="left:726.4px;top:413.23px">4096-6144</div>
<svg class="abs" style="left:777.6px;top:419.13px" width="6.6" height="6.4" viewBox="0 0 15 14"><path d="M13 8V13H2V2H7" fill="none" stroke="#3a44d2" stroke-width="2.6"/><path d="M6.5 8.5L13 2" stroke="#3a44d2" stroke-width="2.2"/></svg>
<svg class="abs" style="left:789px;top:418.73px" width="7.2" height="7.4" viewBox="0 0 10 10"><circle cx="5" cy="5" r="5" fill="#ec0a10"/><rect x="2.2" y="4.1" width="5.6" height="1.8" fill="#fff"/></svg>

<!-- pagination -->
<div class="t" style="left:280.6px;top:439.8px;line-height:13px;font-size:6.2px;color:#555;-webkit-text-stroke:0.15px #555">共有400条记录</div>
<div class="pg" style="left:326.5px;top:440.4px;height:13.2px;line-height:11.4px;width:40.3px;text-align:left;padding-left:4.5px;box-shadow:0 0.5px 1.5px rgba(0,0,0,.06)">20条/页</div>
<div class="abs" style="left:359px;top:445.6px;width:0;height:0;border-left:2.1px solid transparent;border-right:2.1px solid transparent;border-top:2.4px solid #555"></div>
<div class="pg" style="left:612px;width:30.3px">&lt; 上一页</div>
<div class="pg" style="left:648px;width:12px">1</div>
<div class="pg" style="left:665.7px;width:12px">2</div>
<div class="pg" style="left:683px;width:12px">3</div>
<div class="pg" style="left:700.6px;width:12px">4</div>
<div class="pg" style="left:717.7px;width:12px">5</div>
<div class="t" style="left:735.5px;top:441.5px;line-height:12px;font-size:6.3px;color:#888">··</div>
<div class="pg" style="left:746.3px;width:12.3px">12</div>
<div class="pg" style="left:764.3px;width:12.3px">13</div>
<div class="pg" style="left:782px;width:30px">下一页 &gt;</div>
</body></html>
